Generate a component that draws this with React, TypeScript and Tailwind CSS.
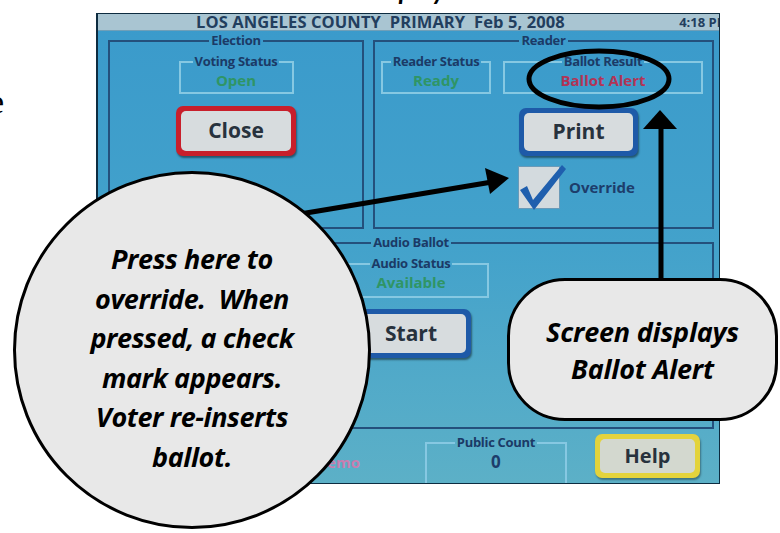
import React from "react";

const lbl = "mx-auto px-[2px] text-[13px] leading-[13px] font-bold text-[#1b3a66] whitespace-nowrap tracking-[-0.3px]";

function Box({ label, w, h, value, color }: { label: string; w: string; h: string; value: string; color: string }) {
  return (
    <fieldset className={`${w} ${h} border-2 border-[#86c8e2] flex flex-col items-center`}>
      <legend className={lbl}>{label}</legend>
      <div className={`pt-[3px] text-[15px] leading-[18px] font-bold ${color}`}>{value}</div>
    </fieldset>
  );
}

export default function App() {
  return (
    <div className="relative w-[780px] h-[533px] bg-white overflow-hidden font-['Open_Sans',sans-serif]">
      {/* cut-off heading */}
      <div className="h-[12px] overflow-hidden pl-[262px]">
        <div className="-mt-[25px] text-[26px] leading-[30px] font-bold italic font-['Lato',sans-serif] text-black whitespace-nowrap">
          Override Display
        </div>
      </div>

      <div className="flex mt-[1px]">
        <div className="w-[96px] overflow-hidden">
          <div className="mt-[72px] -ml-[11px] text-[34px] leading-[34px] font-['Liberation_Serif',serif] text-black">e</div>
        </div>

        {/* screen */}
        <div className="w-[624px] h-[471px] border border-[#0d2c40] border-l-2 overflow-hidden flex flex-col bg-gradient-to-b from-[#3a9acb] via-[#43a2cb] to-[#5cb0c7]">
          {/* title bar */}
          <div className="h-[17px] shrink-0 bg-[#a9c5d2] border-b border-[#6f9fb8] flex items-center font-bold text-[#223e5e] whitespace-nowrap overflow-hidden">
            <div className="pl-[98px] text-[16.5px] leading-[16px] tracking-[0.1px]">LOS ANGELES COUNTY&nbsp;&nbsp;PRIMARY&nbsp;&nbsp;Feb 5, 2008</div>
            <div className="ml-auto -mr-[10px] text-[13px] leading-[16px]">4:18 PM</div>
          </div>

          <div className="flex-1 flex flex-col pl-[10px] pr-[5px]">
            {/* top row */}
            <div className="mt-[3px] flex gap-[9px]">
              <fieldset className="w-[256px] h-[195px] border-2 border-[#24507c] flex flex-col items-center">
                <legend className={lbl}>Election</legend>
                <div className="mt-[8px]">
                  <Box label="Voting Status" w="w-[115px]" h="h-[39px]" value="Open" color="text-[#2f9565]" />
                </div>
                <div className="mt-[12px] w-[120px] h-[50px] rounded-[7px] bg-[#c81f2b] p-[5px] shadow-[1px_2px_2px_rgba(0,0,0,0.45)]">
                  <div className="w-full h-full rounded-[5px] bg-[#d7dcde] flex items-center justify-center text-[21px] font-bold text-[#27323d]">Close</div>
                </div>
              </fieldset>

              <fieldset className="w-[341px] h-[195px] border-2 border-[#24507c] flex flex-col">
                <legend className={lbl}>Reader</legend>
                <div className="mt-[8px] pl-[6px] flex gap-[12px]">
                  <Box label="Reader Status" w="w-[110px]" h="h-[39px]" value="Ready" color="text-[#2f9565]" />
                  <Box label="Ballot Result" w="w-[200px]" h="h-[39px]" value="Ballot Alert" color="text-[#b23456]" />
                </div>
                <div className="mt-[14px] ml-[144px] w-[119px] h-[48px] rounded-[7px] bg-[#1e5aa8] p-[5px] shadow-[1px_2px_2px_rgba(0,0,0,0.45)]">
                  <div className="w-full h-full rounded-[5px] bg-[#d7dcde] flex items-center justify-center text-[21px] font-bold text-[#27323d]">Print</div>
                </div>
                <div className="mt-[10px] ml-[143px] flex items-center gap-[9px]">
                  <div className="relative w-[42px] h-[43px] bg-[#d3dade] border border-[#6a9ab8]">
                    <svg className="absolute left-0 top-0 overflow-visible" width="42" height="43" viewBox="0 0 42 43">
                      <path d="M1 23 L8 19 L14 33 L43 -2 L47 2 L15 43 Z" fill="#1f5fae" />
                    </svg>
                  </div>
                  <div className="text-[15px] font-bold text-[#1d3d6b]">Override</div>
                </div>
              </fieldset>
            </div>

            {/* audio */}
            <fieldset className="mt-[7px] w-[606px] h-[193px] border-2 border-[#24507c] flex flex-col items-center">
              <legend className={lbl}>Audio Ballot</legend>
              <div className="mt-[8px]">
                <Box label="Audio Status" w="w-[156px]" h="h-[41px]" value="Available" color="text-[#2f9565]" />
              </div>
              <div className="mt-[11px] w-[120px] h-[49px] rounded-[7px] bg-[#1e5aa8] p-[5px] shadow-[1px_2px_2px_rgba(0,0,0,0.45)]">
                <div className="w-full h-full rounded-[5px] bg-[#d7dcde] flex items-center justify-center text-[21px] font-bold text-[#27323d]">Start</div>
              </div>
            </fieldset>

            {/* bottom row */}
            <div className="flex-1 flex items-start">
              <div className="mt-[24px] ml-[208px] text-[15px] font-bold text-[#c77fb0] leading-[18px]">Demo</div>
              <fieldset className="ml-[65px] mt-[7px] w-[142px] h-[60px] border-2 border-[#86c8e2] flex flex-col items-center">
                <legend className={lbl}>Public Count</legend>
                <div className="pt-[4px] text-[17px] leading-[18px] font-bold text-[#1d3d6b]">0</div>
              </fieldset>
              <div className="ml-[28px] mt-[5px] w-[105px] h-[44px] rounded-[7px] bg-[#e3d33c] p-[5px] shadow-[1px_2px_2px_rgba(0,0,0,0.35)]">
                <div className="w-full h-full rounded-[5px] bg-[#d3d8cf] flex items-center justify-center text-[20px] font-bold text-[#27323d]">Help</div>
              </div>
            </div>
          </div>
        </div>
      </div>

      {/* arrows and ellipse */}
      <svg className="absolute left-0 top-0 pointer-events-none" width="780" height="533" viewBox="0 0 780 533">
        <line x1="300" y1="214" x2="492" y2="182" stroke="black" strokeWidth="5" />
        <polygon points="509,178 490,194 485,168" fill="black" />
        <line x1="661" y1="282" x2="661" y2="126" stroke="black" strokeWidth="5" />
        <polygon points="660,110 677,129 643,129" fill="black" />
        <ellipse cx="599" cy="79" rx="70" ry="28" fill="none" stroke="black" strokeWidth="5" />
      </svg>

      {/* circle callout */}
      <div className="absolute left-[13px] top-[171px] w-[358px] h-[358px] rounded-full border-[3px] border-black bg-[#e8e8e8] flex flex-col items-center pt-[65px] text-center font-['Open_Sans',sans-serif] font-bold italic text-[27px] leading-[39.5px] tracking-[-0.4px] text-black">
        <div>Press here to</div>
        <div>override.&nbsp; When</div>
        <div>pressed, a check</div>
        <div>mark appears.</div>
        <div>Voter re-inserts</div>
        <div>ballot.</div>
      </div>

      {/* rounded rect callout */}
      <div className="absolute left-[507px] top-[278px] w-[271px] h-[143px] rounded-[58px] border-[3px] border-black bg-[#e8e8e8] flex flex-col items-center justify-center text-center font-['Open_Sans',sans-serif] font-bold italic text-[27px] leading-[37px] tracking-[-0.2px] text-black">
        <div>Screen displays</div>
        <div>Ballot Alert</div>
      </div>
    </div>
  );
}
